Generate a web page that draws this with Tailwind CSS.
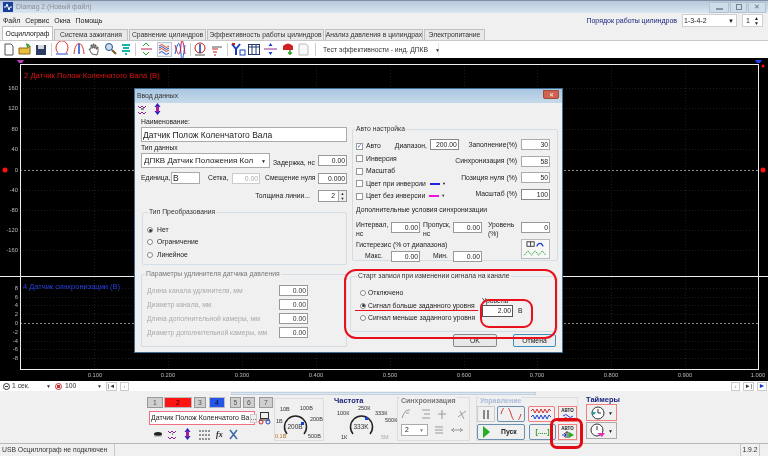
<!DOCTYPE html>
<html lang="ru">
<head>
  <meta charset="UTF-8" />
  <title>Diamag 2</title>
  <script src="https://cdn.jsdelivr.net/npm/@tailwindcss/browser@4"></script>
</head>
<body class="bg-[#f0f0f0]">
<div class="relative w-[768px] h-[456px] overflow-hidden flex flex-col bg-[#f0f0f0] text-[#222] font-['Liberation_Sans',sans-serif] text-[6.8px] leading-[10px] whitespace-nowrap blur-[0.3px]">

  <!-- заголовок окна -->
  <div class="h-[13px] shrink-0 flex items-center border-t border-[#7f8fa5] bg-gradient-to-b from-[#b9c8da] to-[#d9e5f1]">
    <svg class="ml-[3px] w-[10px] h-[10px]" viewBox="0 0 10 10"><rect width="10" height="10" fill="#1a3f9c"/><path d="M1 5h2l1-3 2 6 1-3h2" stroke="#fff" fill="none"/></svg>
    <span class="ml-[3px] text-[#8a8f96]">Diamag 2 (Новый файл)</span>
    <div class="ml-auto mr-[2px] flex gap-px">
      <div class="w-[20px] h-[11px] border border-[#b5c2d0] bg-[#cfdce9] flex items-end justify-center pb-[2px]"><div class="w-[7px] h-[2px] bg-[#8593a3]"></div></div>
      <div class="w-[17px] h-[11px] border border-[#b5c2d0] bg-[#cfdce9] flex items-center justify-center"><div class="w-[6px] h-[6px] border border-[#74818f]"></div></div>
      <div class="w-[18px] h-[11px] border border-[#b5c2d0] bg-[#cfdce9] flex items-center justify-center text-[#66727f] leading-none">✕</div>
    </div>
  </div>

  <!-- меню -->
  <div class="h-[15px] shrink-0 flex items-center pl-[3px] gap-[5px] text-[#222] text-[7px]">
    <span>Файл</span><span>Сервис</span><span>Окна</span><span>Помощь</span>
    <span class="ml-auto text-[#1a237e]">Порядок работы цилиндров</span>
    <div class="w-[55px] h-[13px] bg-white border border-[#d0d0d0] flex items-center pl-[1px] justify-between pr-[2px]"><span>1-3-4-2</span><span class="text-[6px]">▼</span></div>
    <div class="w-[21px] h-[13px] bg-white border border-[#d0d0d0] flex items-center justify-between px-[3px] mr-[5px]"><span>1</span><span class="text-[5px] leading-[5px]">▲<br>▼</span></div>
  </div>

  <!-- вкладки -->
  <div class="h-[13px] shrink-0 flex items-end pl-[2px] gap-px text-[#333] border-b border-[#c8c8c8]">
    <div class="w-[51px] h-[14px] bg-white border border-b-0 border-[#c0c0c0] flex items-center justify-center text-[#111]">Осциллограф</div>
    <div class="w-[74px] h-[11px] bg-[#e8e8e8] border border-b-0 border-[#c0c0c0] flex items-center justify-center">Система зажигания</div>
    <div class="w-[77px] h-[11px] bg-[#e8e8e8] border border-b-0 border-[#c0c0c0] flex items-center justify-center">Сравнение цилиндров</div>
    <div class="w-[117px] h-[11px] bg-[#e8e8e8] border border-b-0 border-[#c0c0c0] flex items-center justify-center">Эффективность работы цилиндров</div>
    <div class="w-[98px] h-[11px] bg-[#e8e8e8] border border-b-0 border-[#c0c0c0] flex items-center justify-center">Анализ давления в цилиндрах</div>
    <div class="w-[61px] h-[11px] bg-[#e8e8e8] border border-b-0 border-[#c0c0c0] flex items-center justify-center">Электропитание</div>
  </div>

  <!-- панель инструментов -->
  <div class="h-[17px] shrink-0 bg-white flex items-center text-[#333]">
    <svg class="w-[439px] h-[17px] shrink-0" viewBox="0 41 439 17" fill="none">
      <path d="M5 44h6l2 2v9H5z" stroke="#555" fill="#fff"/>
      <path d="M19 48h9l2-2v8H19z" fill="#e8c040" stroke="#8a6a10"/><path d="M26 43l4 2-3 3z" fill="#2a9a2a"/>
      <rect x="36" y="45" width="10" height="10" fill="#2b3f66"/><rect x="38" y="45" width="6" height="4" fill="#d8d8d8"/>
      <path d="M51.5 43v13M135.5 43v13M190.5 43v13M227.5 43v13M315.5 43v13M439 43v13" stroke="#ccc"/>
      <path d="M58 53a6 7 0 1 1 8 0" stroke="#e03030"/><path d="M56 54h12" stroke="#1a4ad0"/>
      <path d="M74 54c1-14 9-14 10 0" stroke="#e03030"/><path d="M79 44v10" stroke="#1a4ad0" stroke-width="1.5"/>
      <path d="M92 54l-3-5 2 0v-4h1v3h1v-4h1v4h1v-3h1v4h1v-2h1v5l-1 3z" fill="#fff" stroke="#222" stroke-width=".7"/>
      <circle cx="109" cy="47" r="3.5" stroke="#234a90" fill="#cde"/><path d="M112 50l4 4" stroke="#7a5a20" stroke-width="2"/>
      <path d="M122 45h8M123 48h6M122 51h8M125 54h2" stroke="#12b8b0" stroke-width="2"/>
      <path d="M141 49h11" stroke="#c02050"/><path d="M143 46l3-3 3 3M143 52l3 3 3-3" stroke="#30a030"/>
      <rect x="157.500" y="42.500" width="14" height="14" fill="#f0f4f8" stroke="#b8c8d8"/>
      <path d="M159 46q3-3 5 0t5 0M159 50q3-3 5 0t5 0" stroke="#e04020"/><path d="M159 48q3-3 5 0t5 0M159 53q3-3 5 0t5 0" stroke="#2050d0"/>
      <path d="M175 54c3-14 5-14 6 0s3-2 4-9" stroke="#2050d0"/><path d="M175 45c3 12 5 12 6 0s3 2 4 9" stroke="#c02050"/>
      <circle cx="200" cy="48" r="5" stroke="#c02020"/><path d="M200 44v9" stroke="#1a3a9a" stroke-width="1.500"/><path d="M195 55h10" stroke="#555"/>
      <path d="M212 49h6M213 52h4M214 55h2" stroke="#c02020"/><path d="M212 47h10" stroke="#555"/>
      <path d="M232 44l4 5v6M240 44l-4 5" stroke="#1a40c0" stroke-width="2"/><rect x="240" y="50" width="5" height="5" stroke="#1a40c0"/><path d="M232 44h3" stroke="#c02020" stroke-width="2"/>
      <rect x="248.500" y="44.500" width="11" height="10" stroke="#233a70"/><path d="M252 44v10M256 44v10M248 47h12" stroke="#233a70"/>
      <path d="M264 49h13" stroke="#903090"/><path d="M270.500 43l-2 3h4zM270.500 55l-2-3h4z" fill="#1a40c0"/>
      <path d="M283 46q5-5 10 0v4h-10z" fill="#d02020"/><path d="M290 50v5M288 53h4" stroke="#20a020" stroke-width="1.500"/>
      <path d="M299 44h7l2 2v9h-9z" stroke="#bbb" fill="#f8f8f8"/>
    </svg>
    <span class="ml-[-116px]">Тест эффективности - инд. ДПКВ</span>
    <span class="ml-[7px] text-[5px]">▼</span>
  </div>

  <!-- осциллограмма -->
  <svg class="h-[323px] w-[768px] shrink-0 bg-black" viewBox="0 58 768 323" font-family="Liberation Sans" font-size="5.800">
    <g stroke="#1c1c1c" stroke-dasharray="1 2">
      <path d="M94.500 64v305M168.500 64v305M242.500 64v305M316.500 64v305M390.500 64v305M464.500 64v305M537.500 64v305M611.500 64v305M685.500 64v305"/>
      <path d="M20 88.500h738M20 108.500h738M20 129.500h738M20 149.500h738M20 190.500h738M20 210.500h738M20 230.500h738M20 250.500h738"/>
      <path d="M20 288.500h738M20 297.500h738M20 305.500h738M20 314.500h738M20 332.500h738M20 341.500h738M20 349.500h738M20 358.500h738"/>
    </g>
    <path d="M20 170.500h738M20 323.500h738" stroke="#888" stroke-dasharray="2 2"/>
    <path d="M20.500 64v306M758.500 64v306M20 64.500h739M20 369.500h739M0 276.500h768" stroke="#eee"/>
    <path d="M17 60h7l-2 3h-3z" fill="#c040c0"/><path d="M755 60h7l-2 3h-3z" fill="#2040ff"/>
    <circle cx="5" cy="170" r="2.500" fill="#ff1010"/><circle cx="763" cy="170" r="2.500" fill="#ff1010"/><circle cx="763" cy="66" r="1.500" fill="#ff1010"/>
    <text x="24" y="78" fill="#e01010" font-size="7.700">2 Датчик Полож Коленчатого Вала (В)</text>
    <text x="23" y="289" fill="#2a40e0" font-size="7.500">4 Датчик синхронизации (В)</text>
    <g fill="#bbb" text-anchor="end">
      <text x="18" y="90">160</text><text x="18" y="110">120</text><text x="18" y="131">80</text><text x="18" y="151">40</text><text x="18" y="172">0</text>
      <text x="18" y="192">-40</text><text x="18" y="212">-80</text><text x="18" y="232">-120</text><text x="18" y="252">-160</text>
      <text x="18" y="290">8</text><text x="18" y="299">6</text><text x="18" y="307">4</text><text x="18" y="316">2</text><text x="18" y="325">0</text>
      <text x="18" y="334">-2</text><text x="18" y="343">-4</text><text x="18" y="351">-6</text><text x="18" y="360">-8</text>
    </g>
    <g fill="#bbb" text-anchor="middle">
      <text x="95" y="377">0.100</text><text x="168" y="377">0.200</text><text x="242" y="377">0.300</text><text x="316" y="377">0.400</text><text x="390" y="377">0.500</text>
      <text x="464" y="377">0.600</text><text x="537" y="377">0.700</text><text x="611" y="377">0.800</text><text x="685" y="377">0.900</text><text x="758" y="377">1.000</text>
    </g>
  </svg>

  <!-- масштаб -->
  <div class="h-[10px] shrink-0 bg-white flex items-center text-[#333]">
    <span class="ml-[3px] w-[7px] h-[7px] rounded-full border border-[#333] flex items-center justify-center"><span class="w-[3px] h-px bg-[#333]"></span></span>
    <span class="ml-[2px] w-[34px]">1 сек.</span><span class="text-[5px]">▼</span>
    <span class="ml-[4px] w-[7px] h-[7px] rounded-full border border-[#c03030] flex items-center justify-center"><span class="w-[3px] h-[3px] bg-[#c03030]"></span></span>
    <span class="ml-[3px] w-[32px]">100</span><span class="text-[5px]">▼</span>
    <span class="ml-[4px] w-[11px] h-[9px] border border-[#ccc] flex items-center justify-center text-[6px]">|◄</span>
    <span class="ml-[3px] w-[9px] h-[9px] border border-[#ccc] flex items-center justify-center text-[6px] text-[#888]">‹</span>
    <span class="ml-auto w-[9px] h-[9px] border border-[#ccc] flex items-center justify-center text-[6px] text-[#888]">›</span>
    <span class="ml-[3px] w-[11px] h-[9px] border border-[#ccc] flex items-center justify-center text-[6px]">►|</span>
    <span class="ml-[3px] mr-px w-[10px] h-[9px] border border-[#ccc] flex items-center justify-center text-[7px] text-[#1030e0]">►</span>
  </div>

  <!-- нижняя панель -->
  <div class="h-[53px] shrink-0 relative border-b border-[#b8b8b8]">
    <div class="ml-[231px] mt-px w-[305px] h-[3px] bg-[#dbe7f3] border border-[#c3d0dd]"></div>
    <div class="flex pl-[147px] pt-[2px]">

      <!-- каналы -->
      <div class="w-[127px] shrink-0">
        <div class="flex h-[11px] text-[#555] gap-[1px]">
          <div class="w-[16px] bg-[#cfcfcf] border border-[#999] flex items-center justify-center">1</div>
          <div class="w-[28px] bg-[#ff1414] border border-[#bbb] flex items-center justify-center text-[#300]">2</div>
          <div class="ml-[1px] w-[12px] bg-[#cfcfcf] border border-[#999] flex items-center justify-center">3</div>
          <div class="ml-[2px] w-[16px] bg-[#2454e8] border border-[#bbb] flex items-center justify-center text-[#012]">4</div>
          <div class="ml-[4px] w-[11px] bg-[#cfcfcf] border border-[#999] flex items-center justify-center">5</div>
          <div class="ml-px w-[12px] bg-[#cfcfcf] border border-[#999] flex items-center justify-center">6</div>
          <div class="ml-[3px] w-[14px] bg-[#cfcfcf] border border-[#999] flex items-center justify-center">7</div>
        </div>
        <div class="flex items-center mt-[3px] ml-[2px]">
          <div class="w-[106px] h-[14px] bg-white border border-[#f07080] flex items-center justify-between pl-[1px] pr-px text-[#222] text-[7px]"><span>Датчик Полож Коленчатого Ва</span><span class="w-[9px] h-[9px] border border-[#ccc] bg-[#eee] text-center leading-[6px]">...</span></div>
          <svg class="ml-[3px] w-[13px] h-[14px]" viewBox="0 0 13 14" fill="none"><rect x="2.500" y="1.500" width="8" height="6" stroke="#333"/><path d="M1 9h11" stroke="#333"/><circle cx="3" cy="11" r="2" stroke="#d02020"/><circle cx="10" cy="11" r="2" stroke="#2040d0"/></svg>
        </div>
        <svg class="mt-[3px] ml-[6px] w-[86px] h-[13px]" viewBox="0 0 86 13" fill="none">
          <ellipse cx="5" cy="6" rx="4" ry="2" fill="#222"/><path d="M1 8h8" stroke="#999"/>
          <path d="M15 3l2 2 2-2 2 2 2-2M15 9l2 2 2-2 2 2 2-2" stroke="#902090"/><path d="M19 6h1" stroke="#222"/>
          <path d="M34.500 0l-3 4h6zM34.500 12l-3-4h6z" fill="#2020c0"/><path d="M34.500 3v6" stroke="#a020a0" stroke-width="3"/>
          <path d="M46 3h11M46 7h11M46 11h11" stroke="#333" stroke-dasharray="2 1"/>
          <text x="63" y="9" font-family="Liberation Serif" font-style="italic" font-weight="700" font-size="8" fill="#222">fx</text>
          <path d="M77 2l7 9M84 2l-7 9" stroke="#3a6aa0" stroke-width="1.500"/>
        </svg>
      </div>

      <!-- диапазон -->
      <svg class="w-[52px] h-[44px] shrink-0" viewBox="275 398 52 44" font-family="Liberation Sans" font-size="5.500" fill="#333">
        <path d="M275.500 399.500h49v42h-49z" fill="none" stroke="#ddd"/>
        <path d="M288 435a11 11 0 1 1 17 0" fill="none" stroke="#222" stroke-width="1.500"/>
        <rect x="302" y="423" width="3" height="3" fill="#1a40d0"/>
        <text x="296" y="430" text-anchor="middle" font-size="6.500">200В</text>
        <text x="281" y="412">10В</text><text x="301" y="411">100В</text><text x="311" y="422">200В</text><text x="309" y="439">500В</text><text x="277" y="424">1В</text><text x="276" y="439" fill="#b07020">0.1В</text>
      </svg>

      <!-- частота -->
      <div class="w-[65px] shrink-0 ml-[6px]">
        <svg class="w-[65px] h-[44px] overflow-visible" viewBox="331 398 65 44" font-family="Liberation Sans" font-size="5.500" fill="#333">
          <text x="333" y="404" font-size="7.500" font-weight="700" fill="#1a237e">Частота</text>
          <path d="M352 435a11 11 0 1 1 17 0" fill="none" stroke="#222" stroke-width="1.500"/>
          <rect x="364" y="418" width="3" height="3" fill="#1a40d0"/>
          <text x="360" y="430" text-anchor="middle" font-size="6.500">333K</text>
          <text x="357" y="411">250К</text><text x="336" y="416">100К</text><text x="374" y="416">333К</text><text x="384" y="423">500К</text><text x="340" y="440">1К</text><text x="380" y="440" fill="#aaa">5М</text>
        </svg>
      </div>

      <!-- синхронизация -->
      <div class="w-[73px] shrink-0 h-[44px] border border-[#ddd] relative">
        <div class="font-bold text-[#777] text-[7px] absolute -top-[2px] left-[2px] bg-[#f0f0f0] px-px">Синхронизация</div>
        <svg class="absolute left-[2px] top-[10px] w-[68px] h-[13px]" viewBox="0 0 68 13" fill="none" stroke="#999"><path d="M2 10c3-8 5-8 8-8M6 5h3M22 2h8M24 6h6M22 10h8M42 2v9M38 6h8M58 9l8-6M60 3l4 8"/></svg>
        <div class="absolute left-[3px] top-[26px] w-[27px] h-[12px] bg-white border border-[#aaa] flex items-center justify-between px-[3px]"><span>2</span><span class="text-[5px] text-[#888]">▼</span></div>
        <svg class="absolute left-[36px] top-[26px] w-[32px] h-[12px]" viewBox="0 0 32 12" fill="none" stroke="#999"><path d="M1 3h8M1 6h8M1 9h8M17 6h12M20 4l-2 2 2 2M26 4l2 2-2 2"/></svg>
      </div>

      <!-- управление -->
      <div class="w-[102px] shrink-0 h-[44px] ml-[6px] border border-[#ddd] relative">
        <div class="font-bold text-[#a8bcd8] text-[7px] absolute -top-[2px] left-[2px] bg-[#f0f0f0] px-px">Управление</div>
        <div class="flex gap-[2px] mt-[8px] h-[16px]">
          <div class="w-[18px] border border-[#ccc] flex items-center justify-center gap-[2px]"><span class="w-[2px] h-[9px] bg-[#888]"></span><span class="w-[2px] h-[9px] bg-[#888]"></span></div>
          <div class="w-[28px] border border-[#6a90b0] rounded-[2px] flex items-center justify-center"><svg class="w-[22px] h-[12px]" viewBox="0 0 22 12" fill="none"><path d="M1 6c3-10 7-10 10 0s7 10 10 0" stroke="#d03030"/></svg></div>
          <div class="ml-px w-[27px] border border-[#f08080] rounded-[2px] flex items-center justify-center"><svg class="w-[23px] h-[12px]" viewBox="0 0 23 12" fill="none"><path d="M1 3l2-2 2 4 2-4 2 4 2-4 2 4 2-4 2 4 2-4 2 2" stroke="#d03030"/><path d="M1 9l2-2 2 4 2-4 2 4 2-4 2 4 2-4 2 4 2-4 2 2" stroke="#2040d0"/></svg></div>
          <div class="ml-px w-[19px] border border-[#f08080] flex flex-col items-center justify-center text-[4.500px] leading-[5px] font-bold">АВТО<svg class="w-[12px] h-[8px]" viewBox="0 0 12 8" fill="none"><path d="M1 3q3-3 5 0t5 0" stroke="#2040d0"/><path d="M1 6q3-3 5 0t5 0" stroke="#903090"/></svg></div>
        </div>
        <div class="flex gap-[2px] mt-[2px] h-[16px]">
          <div class="w-[48px] border border-[#6a90b0] rounded-[2px] flex items-center pl-[5px] gap-[11px] font-bold text-[#222]"><span class="border-l-[7px] border-l-[#20b020] border-y-[6px] border-y-transparent"></span>Пуск</div>
          <div class="ml-[2px] w-[27px] border border-[#6a90b0] rounded-[2px] flex items-center justify-center font-bold text-[#20a020]">[.....]</div>
          <div class="w-[19px] border border-[#f08080] flex flex-col items-center justify-center text-[4.500px] leading-[5px] font-bold">АВТО<svg class="w-[13px] h-[8px]" viewBox="0 0 13 8" fill="none"><path d="M1 4h3M3 2l2 2-2 2" stroke="#2040d0"/><path d="M5 7V1h2v6" stroke="#333"/><path d="M8 1l5 3-5 3z" fill="#20b020"/></svg></div>
        </div>
      </div>

      <!-- таймеры -->
      <div class="w-[32px] shrink-0 ml-[8px]">
        <div class="font-bold text-[#1a237e] text-[7.500px] mt-[-2px] h-[9px]">Таймеры</div>
        <div class="w-[31px] h-[17px] border border-[#f08080] flex items-center pl-[3px] gap-[2px]"><svg class="w-[16px] h-[14px]" viewBox="0 0 16 14" fill="none"><circle cx="8" cy="7" r="6" stroke="#333" fill="#fff"/><path d="M8 7V3M8 7h3" stroke="#333"/><path d="M1 6h5l-2 3z" fill="#20a0a0"/></svg><span class="text-[5px]">▼</span></div>
        <div class="w-[31px] h-[17px] mt-px border border-[#aaa] flex items-center pl-[3px] gap-[2px]"><svg class="w-[16px] h-[15px]" viewBox="0 0 16 15" fill="none"><circle cx="7" cy="7" r="6" stroke="#333" fill="#fff"/><path d="M7 7V3" stroke="#333"/><path d="M7 10h8l-3 4z" fill="#e030c0"/></svg><span class="text-[5px]">▼</span></div>
      </div>
    </div>
  </div>

  <!-- строка состояния -->
  <div class="flex-1 flex items-center pl-[2px] text-[#333]">
    <span class="w-[113px] border-r border-[#c8c8c8] h-full flex items-center">USB Осциллограф не подключен</span>
    <span class="ml-auto mr-[8px] w-[20px] h-full border-x border-[#c8c8c8] text-center leading-[11px]">1.9.2</span>
  </div>

  <!-- диалог -->
  <div class="absolute left-[134px] top-[88px] w-[429px] h-[265px] bg-[#f0f0f0] border border-[#3f6f92] flex flex-col">
    <div class="h-[14px] shrink-0 bg-gradient-to-b from-[#a9c6e2] to-[#c6d9ea] flex items-center pl-[2px] relative text-[#333]">
      Ввод данных
      <div class="absolute right-[3px] top-px w-[16px] h-[9px] bg-[#d0634f] border border-[#a04a3a] rounded-b-[2px] flex items-center justify-center text-white text-[6px] leading-none">✕</div>
    </div>
    <svg class="w-[30px] h-[13px] shrink-0 ml-[2px]" viewBox="0 0 30 13" fill="none"><path d="M1 3l2 2 2-2 2 2 2-2M1 9l2 2 2-2 2 2 2-2" stroke="#902090"/><path d="M4 6h3" stroke="#222"/><path d="M20.500 0l-3 4h6zM20.500 12l-3-4h6z" fill="#2020c0"/><path d="M20.500 3v6" stroke="#a020a0" stroke-width="3"/></svg>

    <div class="flex pl-[6px] gap-[5px]">
      <!-- левая колонка -->
      <div class="w-[206px] shrink-0">
        <div class="h-[11px] pt-[1px]">Наименование:</div>
        <div class="h-[15px] bg-white border border-[#aaa] flex items-center pl-[1px] text-[8.500px] text-[#222]">Датчик Полож Коленчатого Вала</div>
        <div class="h-[10px] mt-[1px]">Тип данных</div>
        <div class="flex h-[15px]">
          <div class="w-[129px] h-[15px] bg-white border border-[#aaa] flex items-center pl-[2px] justify-between pr-[3px] text-[8px]"><span>ДПКВ Датчик Положения Кол</span><span class="text-[5px]">▼</span></div>
          <span class="ml-[3px] w-[45px] mt-[5px]">Задержка, нс</span>
          <span class="mt-[2px] w-[29px] h-[11px] bg-white border border-[#999] text-right pr-px">0.00</span>
        </div>
        <div class="flex items-center h-[12px] mt-[4px]">
          <span class="w-[30px]">Единица,</span><span class="w-[29px] h-[12px] bg-white border border-[#aaa] pl-px text-[8.500px] leading-[10px]">В</span>
          <span class="ml-[8px] w-[24px]">Сетка,</span><span class="w-[28px] h-[11px] bg-white border border-[#ccc] text-right pr-px text-[#aaa]">0.00</span>
          <span class="ml-[5px] w-[53px]">Смещение нуля</span><span class="w-[29px] h-[11px] bg-white border border-[#999] text-right pr-px">0.000</span>
        </div>
        <div class="flex items-center h-[12px] mt-[6px] justify-end">
          <span class="mr-[8px]">Толщина линии...</span>
          <span class="w-[29px] h-[12px] bg-white border border-[#999] flex items-center justify-end">2<span class="ml-[3px] w-[8px] h-full bg-[#eee] border-l border-[#aaa] text-[4px] leading-[5px] text-center">▲<br>▼</span></span>
        </div>
        <fieldset class="mt-[5px] h-[58px] ml-px min-w-0 border border-[#d4dde3] rounded-[2px]">
          <legend class="ml-[5px] px-px text-[#333]">Тип Преобразования</legend>
          <div class="pl-[4px] pt-[8px] flex flex-col gap-[2.400px]">
            <label class="flex items-center gap-[4px] h-[10px]"><span class="w-[6px] h-[6px] rounded-full border border-[#888] bg-white flex items-center justify-center"><span class="w-[3px] h-[3px] rounded-full bg-[#333]"></span></span>Нет</label>
            <label class="flex items-center gap-[4px] h-[10px]"><span class="w-[6px] h-[6px] rounded-full border border-[#888] bg-white"></span>Ограничение</label>
            <label class="flex items-center gap-[4px] h-[10px]"><span class="w-[6px] h-[6px] rounded-full border border-[#888] bg-white"></span>Линейное</label>
          </div>
        </fieldset>
        <fieldset class="mt-[4px] h-[78px] min-w-0 border border-[#d4dde3] rounded-[2px] text-[#aaa]">
          <legend class="ml-[3px] px-px text-[#777]">Параметры удлинителя датчика давления</legend>
          <div class="pl-[5px] pr-[38px] pt-[6px] flex flex-col gap-[3px]">
            <div class="flex justify-between items-center h-[11px]"><span>Длина канала удлинителя, мм</span><span class="w-[29px] h-[11px] bg-white border border-[#999] text-right pr-px text-[#333]">0.00</span></div>
            <div class="flex justify-between items-center h-[11px]"><span>Диаметр канала, мм</span><span class="w-[29px] h-[11px] bg-white border border-[#999] text-right pr-px text-[#333]">0.00</span></div>
            <div class="flex justify-between items-center h-[11px]"><span>Длина дополнительной камеры, мм</span><span class="w-[29px] h-[11px] bg-white border border-[#999] text-right pr-px text-[#333]">0.00</span></div>
            <div class="flex justify-between items-center h-[11px]"><span>Диаметр дополнительной камеры, мм</span><span class="w-[29px] h-[11px] bg-white border border-[#999] text-right pr-px text-[#333]">0.00</span></div>
          </div>
        </fieldset>
      </div>

      <!-- правая колонка -->
      <div class="w-[206px] shrink-0 pt-[8px]">
        <fieldset class="h-[137px] min-w-0 border border-[#d4dde3] rounded-[2px] relative">
          <legend class="ml-[2px] px-px text-[#333]">Авто настройка</legend>
          <div class="flex pl-[3px]">
            <div class="w-[103px] shrink-0 pt-[6px]">
              <div class="flex items-center h-[12.500px]"><span class="w-[7px] h-[7px] border border-[#999] bg-white text-[6px] leading-[6px] text-[#2050c0] flex items-center justify-center mr-[3px]">✓</span>Авто<span class="ml-[14px]">Диапазон,</span><span class="ml-[3px] -mt-[4px] w-[29px] h-[11px] bg-white border border-[#888] text-right pr-px">200.00</span></div>
              <div class="flex items-center h-[12.500px]"><span class="w-[7px] h-[7px] border border-[#999] bg-white mr-[3px]"></span>Инверсия</div>
              <div class="flex items-center h-[12.500px]"><span class="w-[7px] h-[7px] border border-[#999] bg-white mr-[3px]"></span>Масштаб</div>
              <div class="flex items-center h-[12.500px]"><span class="w-[7px] h-[7px] border border-[#999] bg-white mr-[3px]"></span>Цвет при инверсии<span class="ml-[4px] w-[10px] h-[2px] bg-[#2020e0]"></span><span class="ml-[2px] text-[4px]">▼</span></div>
              <div class="flex items-center h-[12.500px]"><span class="w-[7px] h-[7px] border border-[#999] bg-white mr-[3px]"></span>Цвет без инверсии<span class="ml-[4px] w-[10px] h-[2px] bg-[#f010e0]"></span><span class="ml-[2px] text-[4px]">▼</span></div>
            </div>
            <div class="flex-1 min-w-0 pr-[7px] pt-[5px] flex flex-col gap-[5.500px] text-right">
              <div class="flex justify-end items-center h-[11px] gap-[4px]"><span>Заполнение(%)</span><span class="w-[29px] h-[11px] bg-white border border-[#aaa] pr-px">30</span></div>
              <div class="flex justify-end items-center h-[11px] gap-[4px]"><span>Синхронизация (%)</span><span class="w-[29px] h-[11px] shrink-0 bg-white border border-[#aaa] pr-px">58</span></div>
              <div class="flex justify-end items-center h-[11px] gap-[4px]"><span>Позиция нуля (%)</span><span class="w-[29px] h-[11px] shrink-0 bg-white border border-[#aaa] pr-px">50</span></div>
              <div class="flex justify-end items-center h-[11px] gap-[4px]"><span>Масштаб (%)</span><span class="w-[29px] h-[11px] bg-white border border-[#888] pr-px">100</span></div>
            </div>
          </div>
          <div class="ml-[3px] mt-[2px] h-[10px]">Дополнительные условия синхронизации</div>
          <div class="flex ml-[3px] mt-[5px] h-[20px] items-start">
            <span class="w-[35px] leading-[9px]">Интервал,<br>нс</span><span class="w-[29px] h-[11px] bg-white border border-[#999] text-right pr-px mt-[2px]">0.00</span>
            <span class="ml-[3px] w-[30px] leading-[9px]">Пропуск,<br>нс</span><span class="w-[29px] h-[11px] bg-white border border-[#999] text-right pr-px mt-[2px]">0.00</span>
            <span class="ml-[6px] w-[33px] leading-[9px]">Уровень<br>(%)</span><span class="w-[29px] h-[11px] bg-white border border-[#999] text-right pr-px mt-[2px]">0</span>
          </div>
          <div class="relative ml-[3px]">
            <div>Гистерезис (% от диапазона)</div>
            <div class="flex items-center h-[11px] mt-[1px]">
              <span class="w-[35px] pl-[9px]">Макс.</span><span class="w-[29px] h-[11px] bg-white border border-[#999] text-right pr-px">0.00</span>
              <span class="ml-[3px] w-[30px] text-right pr-[5px]">Мин.</span><span class="w-[29px] h-[11px] bg-white border border-[#999] text-right pr-px">0.00</span>
            </div>
            <svg class="absolute left-[165px] -top-[1px] w-[29px] h-[20px] bg-[#f8f8f8] border border-[#bbb]" viewBox="0 0 29 20" fill="none"><rect x="5" y="2" width="8" height="5" stroke="#333"/><path d="M9 2v5" stroke="#333"/><path d="M16 7q1-4 5-3l2 3" stroke="#2040d0" stroke-width="1.500"/><path d="M2 17l4-5 4 5 4-5 4 5 4-5 4 5" stroke="#20a020" stroke-dasharray="2 1"/></svg>
          </div>
        </fieldset>
        <fieldset class="mt-[10px] -ml-[2px] w-[208px] h-[61px] min-w-0 border border-[#d4dde3] rounded-[2px] relative">
          <legend class="ml-[6px] px-px text-[#333]">Старт записи при изменении сигнала на канале</legend>
          <div class="flex pl-[9px] pt-[7px]">
            <div class="w-[122px] flex flex-col gap-[2.500px]">
              <label class="flex items-center gap-[2px] h-[10px]"><span class="w-[6px] h-[6px] rounded-full border border-[#888] bg-white"></span>Отключено</label>
              <label class="flex items-center gap-[2px] h-[10px]"><span class="w-[6px] h-[6px] rounded-full border border-[#888] bg-white flex items-center justify-center"><span class="w-[3px] h-[3px] rounded-full bg-[#333]"></span></span>Сигнал больше заданного уровня</label>
              <label class="flex items-center gap-[2px] h-[10px]"><span class="w-[6px] h-[6px] rounded-full border border-[#888] bg-white"></span>Сигнал меньше заданного уровня</label>
            </div>
            <div class="pt-[8px]">
              <div class="h-[9px]">Уровень</div>
              <div class="flex items-center"><span class="w-[31px] h-[12px] bg-white border border-[#555] text-right pr-px leading-[10px]">2.00</span><span class="ml-[5px]">В</span></div>
            </div>
          </div>
        </fieldset>
        <div class="flex justify-end gap-[16px] mt-[2px] pr-[2px] relative">
          <div class="w-[44px] h-[13px] border border-[#888] bg-[#e8e8e8] rounded-[2px] flex items-center justify-center">OK</div>
          <div class="w-[43px] h-[13px] border border-[#3a90c0] bg-[#ececec] rounded-[2px] flex items-center justify-center">Отмена</div>
        </div>
      </div>
    </div>
  </div>

  <!-- красные пометки -->
  <div class="absolute left-[344px] top-[269px] w-[213px] h-[70px] border-[2px] border-[#e8101c] rounded-[12px]"></div>
  <div class="absolute left-[480px] top-[299px] w-[53px] h-[29px] border-[2px] border-[#e8101c] rounded-[9px]"></div>
  <div class="absolute left-[355px] top-[310px] w-[123px] h-[1px] bg-[#e8101c]"></div>
  <div class="absolute left-[550px] top-[418px] w-[33px] h-[31px] border-[3px] border-[#e00c14] rounded-[7px]"></div>
</div>
</body>
</html>
